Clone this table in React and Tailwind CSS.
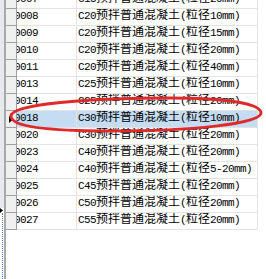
import React from "react";

const rows = [
  ["0007", "C15预拌普通混凝土(粒径20mm)"],
  ["0008", "C20预拌普通混凝土(粒径10mm)"],
  ["0009", "C20预拌普通混凝土(粒径15mm)"],
  ["0010", "C20预拌普通混凝土(粒径20mm)"],
  ["0011", "C20预拌普通混凝土(粒径40mm)"],
  ["0013", "C25预拌普通混凝土(粒径10mm)"],
  ["0014", "C25预拌普通混凝土(粒径20mm)"],
  ["0018", "C30预拌普通混凝土(粒径10mm)", true],
  ["0020", "C30预拌普通混凝土(粒径20mm)"],
  ["0023", "C40预拌普通混凝土(粒径20mm)"],
  ["0024", "C40预拌普通混凝土(粒径5-20mm)"],
  ["0025", "C45预拌普通混凝土(粒径20mm)"],
  ["0026", "C50预拌普通混凝土(粒径20mm)"],
  ["0027", "C55预拌普通混凝土(粒径20mm)"],
];

function Txt({ s }) {
  const parts = s.split(/([\x00-\x7f]+)/).filter(Boolean);
  return (
    <span className="whitespace-nowrap">
      {parts.map((p, i) =>
        /^[\x00-\x7f]+$/.test(p) ? (
          <span
            key={i}
            className="font-['Liberation_Mono',monospace] text-[11px] tracking-[-0.6px]"
          >
            {p}
          </span>
        ) : (
          <span key={i}>{p}</span>
        )
      )}
    </span>
  );
}

function Row({ id, name, sel }) {
  const bg = sel ? "bg-[#c5dcf3]" : "bg-white";
  return (
    <div className="flex h-[17px] shrink-0">
      <div className="w-[11px] h-full box-border bg-[#f0f0f0] border-b border-r border-[#a0a0a0] flex items-center justify-center">
        {sel && (
          <svg width="4" height="7" viewBox="0 0 4 7" className="ml-[-1px]">
            <path d="M0 0 L4 3.5 L0 7 Z" fill="#000" />
          </svg>
        )}
      </div>
      <div
        className={`w-[60px] h-full box-border border-b border-r border-[#e3e3e3] overflow-hidden ${bg}`}
      >
        <div className="ml-[-3px] leading-[10px]">
          <Txt s={id} />
        </div>
      </div>
      <div
        className={`w-[181px] h-full box-border border-b border-r border-[#e3e3e3] overflow-hidden pl-[1px] ${bg}`}
      >
        <div className="leading-[10px]">
          <Txt s={name} />
        </div>
      </div>
    </div>
  );
}

export default function App() {
  return (
    <div className="relative w-[266px] h-[279px] overflow-hidden bg-white flex font-['Noto_Sans_CJK_SC',sans-serif] text-[12px] text-black">
      {/* left splitter strip */}
      <div className="w-[4px] h-full flex flex-col">
        <div className="h-[208px] bg-[#e6e8eb]" />
        <svg width="4" height="5" viewBox="0 0 4 5" className="shrink-0">
          <path d="M0 0 L3 2.5 L0 5 Z" fill="#000" />
        </svg>
        <div className="flex-1 ml-[2px] w-[1px] border-l border-dotted border-[#4a7fd6]" />
      </div>
      <div className="w-[2px] h-full bg-[#a8a8a8]" />
      {/* grid */}
      <div className="flex flex-col mt-[-8px]">
        {rows.map(([id, name, sel]) => (
          <Row key={id} id={id} name={name} sel={sel} />
        ))}
      </div>
      {/* red annotation ellipse */}
      <svg
        className="absolute inset-0 pointer-events-none"
        width="266"
        height="279"
        viewBox="0 0 266 279"
      >
        <path
          d="M 11 116 C 11 104, 90 98, 170 98 C 222 98, 261 103, 261 113 C 261 124, 190 131, 110 131 C 50 131, 11 127, 11 116 Z"
          fill="none"
          stroke="#e02a2a"
          strokeWidth="3"
        />
      </svg>
    </div>
  );
}
